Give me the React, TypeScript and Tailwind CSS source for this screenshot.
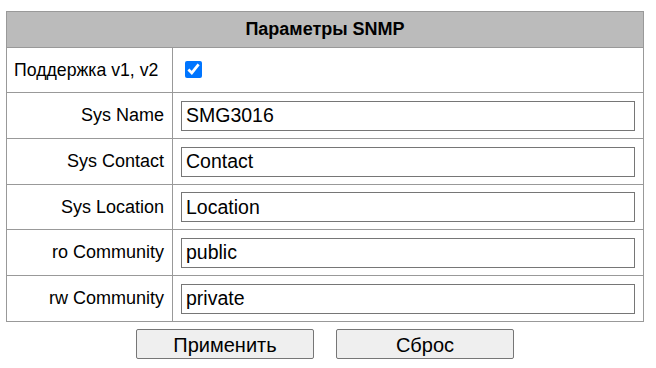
const fields = [
  { label: "Sys Name", value: "SMG3016", h: "h-[46px]" },
  { label: "Sys Contact", value: "Contact", h: "h-[46px]" },
  { label: "Sys Location", value: "Location", h: "h-[45px]" },
  { label: "ro Community", value: "public", h: "h-[46px]" },
  { label: "rw Community", value: "private", h: "h-[46px]" },
];

export default function App() {
  return (
    <div className="min-h-screen bg-white pt-[11px] pl-[6px] font-['Liberation_Sans',Arial,sans-serif] text-black">
      <table className="w-[638px] border-collapse">
        <thead>
          <tr>
            <th
              colSpan={2}
              className="h-[36px] border border-[#999999] bg-[#bbbbbb] text-[18px] font-bold"
            >
              Параметры SNMP
            </th>
          </tr>
        </thead>
        <tbody>
          <tr className="h-[45px]">
            <td className="w-[166px] border border-[#999999] pl-[7px] text-left text-[17.7px]">
              Поддержка v1, v2
            </td>
            <td className="border border-[#999999] pl-[12px]">
              <input
                type="checkbox"
                defaultChecked
                className="-mt-[2px] block h-[17px] w-[17px] accent-[#0075ff]"
              />
            </td>
          </tr>
          {fields.map((f) => (
            <tr key={f.label} className={f.h}>
              <td className="border border-[#999999] pr-[8px] text-right text-[18px]">
                {f.label}
              </td>
              <td className="border border-[#999999] px-[8px]">
                <input
                  type="text"
                  defaultValue={f.value}
                  spellCheck={false}
                  className="block h-[30px] w-[454px] border border-[#767676] px-[4px] text-[19.5px] outline-none"
                />
              </td>
            </tr>
          ))}
        </tbody>
      </table>
      <div className="mt-[7px] flex w-[638px] justify-center gap-[22px]">
        <button className="h-[30px] w-[178px] rounded-[2px] border border-[#767676] bg-[#efefef] text-[20px]">
          Применить
        </button>
        <button className="h-[30px] w-[178px] rounded-[2px] border border-[#767676] bg-[#efefef] text-[20px]">
          Сброс
        </button>
      </div>
    </div>
  );
}
